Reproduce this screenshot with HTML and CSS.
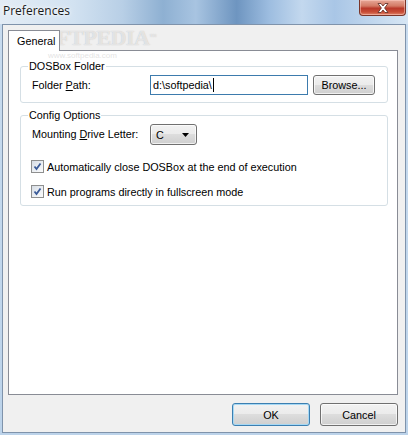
FILE: index.html
```html
<!DOCTYPE html>
<html lang="en">

<head>
    <meta charset="UTF-8">
    <title>Preferences</title>
    <link rel="stylesheet" href="styles.css">
</head>

<body>

    <div class="window">
        <div class="titlebar">
            <span class="title">Preferences</span>
            <button class="close-btn" aria-label="Close">
                <svg width="16" height="12" viewBox="0 0 16 12">
                    <path d="M3 1.5 L6 1.5 L8 4 L10 1.5 L13 1.5 L9.6 6 L13 10.5 L10 10.5 L8 8 L6 10.5 L3 10.5 L6.4 6 Z"
                        fill="#fff" stroke="#5a2a22" stroke-width="0.8" stroke-linejoin="round" />
                </svg>
            </button>
        </div>

        <div class="client">
            <div class="tabs">
                <div class="tab active">General</div>
            </div>

            <div class="panel">
                <!-- DOSBox folder -->
                <fieldset class="group">
                    <legend>DOSBox Folder</legend>
                    <div class="row">
                        <label class="row-label">Folder <u>P</u>ath:</label>
                        <div class="textbox">d:\softpedia\<span class="caret"></span></div>
                        <button class="btn browse">Browse...</button>
                    </div>
                </fieldset>

                <!-- Options -->
                <fieldset class="group">
                    <legend>Config Options</legend>
                    <div class="row">
                        <label class="row-label">Mounting <u>D</u>rive Letter:</label>
                        <div class="combo">
                            <span>C</span>
                            <svg width="8" height="4" viewBox="0 0 8 4">
                                <path d="M0 0 H7 L3.5 4 Z" fill="#000" />
                            </svg>
                        </div>
                    </div>
                    <div class="checks">
                        <label class="check">
                            <span class="box">
                                <svg width="11" height="11" viewBox="0 0 11 11">
                                    <path d="M2.5 5.5 L4.5 8 L8.5 2.5" fill="none" stroke="#3a5a98" stroke-width="1.8" />
                                </svg>
                            </span>
                            Automatically close DOSBox at the end of execution
                        </label>
                        <label class="check">
                            <span class="box">
                                <svg width="11" height="11" viewBox="0 0 11 11">
                                    <path d="M2.5 5.5 L4.5 8 L8.5 2.5" fill="none" stroke="#3a5a98" stroke-width="1.8" />
                                </svg>
                            </span>
                            Run programs directly in fullscreen mode
                        </label>
                    </div>
                </fieldset>
            </div>

            <div class="buttons">
                <button class="btn default">OK</button>
                <button class="btn">Cancel</button>
            </div>
        </div>

        <!-- site watermark over the dialog -->
        <div class="watermark">
            <span class="wm-big">SOFTPEDIA<sup>™</sup></span>
            <span class="wm-small">www.softpedia.com</span>
        </div>
    </div>

</body>

</html>
```

FILE: styles.css
```css
* {
    box-sizing: border-box;
}

body,
html {
    margin: 0;
    width: 408px;
    height: 435px;
    overflow: hidden;
    font-family: "Liberation Sans", Arial, sans-serif;
    font-size: 10.8px;
    color: #000;
}

.window {
    position: relative;
    display: flex;
    flex-direction: column;
    height: 435px;
    background: linear-gradient(180deg, #c9dcef 0%, #bcd3ea 100%);
}

.titlebar {
    height: 24px;
    display: flex;
    align-items: flex-start;
    justify-content: space-between;
    padding-left: 3px;
    background: linear-gradient(90deg, #e3ecf5 0%, #d2e2f1 18%, #b8cfe6 30%, #8eb0d2 40%, #a8c4e1 48%, #6e95c0 58%, #9dbde0 66%, #c3d8ee 74%, #a9c6e6 82%, #d7e6f4 100%);
}

.title {
    font-family: "Open Sans", "Noto Sans", sans-serif;
    font-size: 12px;
    line-height: 22px;
    color: #1a1a1a;
    text-shadow: 0 0 6px #fff, 0 0 3px #fff;
}

.close-btn {
    width: 47px;
    height: 16px;
    margin-right: 2px;
    padding: 0;
    display: flex;
    align-items: center;
    justify-content: center;
    border: 1px solid #7a3529;
    border-top: none;
    border-radius: 0 0 4px 4px;
    background: linear-gradient(180deg, #e7a898 0%, #d37a65 40%, #b9392a 55%, #c84d36 80%, #e0866c 100%);
    box-shadow: inset 0 0 0 1px rgba(255, 210, 200, 0.5);
}

.client {
    flex-grow: 1;
    margin: 0 2px 2px 2px;
    padding: 5px 7px 0 5px;
    border: 1px solid #7f93ab;
    background: #f0f0f0;
    display: flex;
    flex-direction: column;
}

.tabs {
    display: flex;
    height: 20px;
    position: relative;
    z-index: 1;
}

.tab {
    width: 52px;
    height: 21px;
    padding: 4px 0 0 8px;
    border: 1px solid #898c95;
    border-bottom: none;
    background: #fff;
}

.panel {
    height: 345px;
    border: 1px solid #898c95;
    background: #fff;
    padding: 9px 9px 0 11px;
}

.group {
    margin: 0 0 6px 0;
    padding: 2px 0 7px 11px;
    border: 1px solid #d5dfe5;
    border-radius: 3px;
    min-width: 0;
}

.group legend {
    padding: 0 1px;
    margin-left: -4px;
    line-height: 13px;
}

.row {
    display: flex;
    align-items: center;
    height: 20px;
}

.row-label {
    width: 118px;
    flex-shrink: 0;
}

.textbox {
    width: 158px;
    height: 20px;
    padding: 3px 2px;
    border: 1px solid #3d7bad;
    background: #fff;
    display: flex;
    align-items: center;
}

.caret {
    display: inline-block;
    width: 1px;
    height: 14px;
    background: #000;
    margin-left: 1px;
}

.btn {
    font-family: "Liberation Sans", Arial, sans-serif;
    font-size: 10.8px;
    color: #000;
    height: 23px;
    padding: 0;
    border: 1px solid #707070;
    border-radius: 3px;
    background: linear-gradient(180deg, #f2f2f2 0%, #ebebeb 49%, #dddddd 50%, #cfcfcf 100%);
    box-shadow: inset 0 0 0 1px rgba(255, 255, 255, 0.7);
}

.browse {
    width: 62px;
    height: 20px;
    margin-left: 5px;
}

.combo {
    width: 47px;
    height: 21px;
    margin-top: 1px;
    padding: 0 6px 0 5px;
    display: flex;
    align-items: center;
    justify-content: space-between;
    border: 1px solid #707070;
    border-radius: 3px;
    background: linear-gradient(180deg, #f2f2f2 0%, #ebebeb 49%, #dddddd 50%, #cfcfcf 100%);
    box-shadow: inset 0 0 0 1px rgba(255, 255, 255, 0.7);
}

.checks {
    display: flex;
    flex-direction: column;
    gap: 12px;
    margin-top: 16px;
    margin-left: -1px;
}

.check {
    display: flex;
    align-items: center;
    gap: 3px;
    height: 13px;
}

.box {
    width: 13px;
    height: 13px;
    display: flex;
    align-items: center;
    justify-content: center;
    border: 1px solid #8e8f8f;
    background: linear-gradient(135deg, #d6dce4 0%, #eef1f5 60%, #fbfbfb 100%);
}

.buttons {
    display: flex;
    justify-content: flex-end;
    gap: 10px;
    padding: 8px 0 0 0;
}

.buttons .btn {
    width: 78px;
}

.btn.default {
    border-color: #3c7fb1;
    box-shadow: inset 0 0 0 1px #a6d8f4;
}

.watermark {
    position: absolute;
    left: 28px;
    top: 26px;
    display: flex;
    flex-direction: column;
    pointer-events: none;
}

.wm-big {
    font-family: "Liberation Serif", serif;
    font-size: 22px;
    font-weight: bold;
    letter-spacing: -0.5px;
    line-height: 23px;
    color: rgba(255, 255, 255, 0.6);
    text-shadow: 0 0 1px rgba(160, 160, 160, 0.7);
}

.wm-big sup {
    font-size: 7px;
    vertical-align: top;
}

.wm-small {
    margin: 2px 0 0 20px;
    font-size: 8px;
    line-height: 9px;
    color: rgba(200, 200, 200, 0.5);
}
```
